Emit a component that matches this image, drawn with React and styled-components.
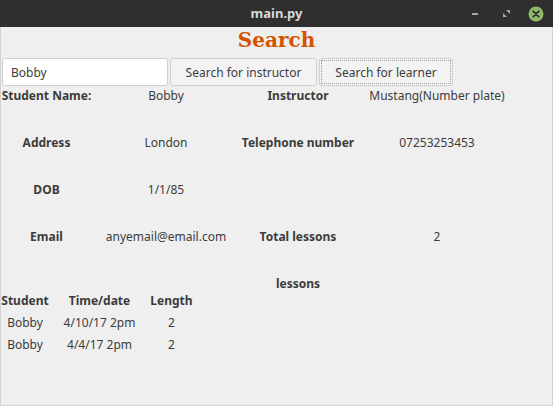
import React from "react";
import styled, { createGlobalStyle } from "styled-components";

const GlobalStyle = createGlobalStyle`
  html, body { margin: 0; padding: 0; background: #efefef; }
  body { font-family: "Noto Sans", "Open Sans", sans-serif; }
  * { box-sizing: border-box; }
`;

const Window = styled.div`
  width: 553px;
  height: 406px;
  display: flex;
  flex-direction: column;
  overflow: hidden;
`;

const TitleBar = styled.div`
  height: 27px;
  flex: none;
  background: #2f2f2f;
  display: grid;
  grid-template-columns: 1fr auto 1fr;
  align-items: center;
`;

const WindowTitle = styled.div`
  grid-column: 2;
  color: #d9d9d9;
  font-weight: 700;
  font-size: 13px;
  line-height: 27px;
`;

const Controls = styled.div`
  grid-column: 3;
  justify-self: end;
  display: flex;
  align-items: center;
  padding-right: 4px;
`;

const ControlSlot = styled.div`
  width: ${(p) => p.$w}px;
  height: 27px;
  display: flex;
  align-items: center;
  justify-content: center;
`;

const Body = styled.div`
  flex: 1;
  background: #efefef;
  border: 1px solid #d3d3d3;
  border-top: none;
  display: flex;
  flex-direction: column;
  color: #3c3c3c;
  font-size: 12px;
`;

const Heading = styled.h1`
  margin: 0;
  height: 31px;
  text-align: center;
  font-family: "DejaVu Serif", "Liberation Serif", serif;
  font-weight: 700;
  font-size: 20px;
  line-height: 26px;
  color: #d35400;
`;

const SearchRow = styled.div`
  display: flex;
  gap: 2px;
  height: 28px;
  padding-left: 1px;
`;

const Entry = styled.input`
  width: 166px;
  height: 28px;
  border: 1px solid #cfcfcf;
  border-radius: 3px;
  background: #ffffff;
  padding: 0 0 0 8px;
  font-family: inherit;
  font-size: 12px;
  color: #3c3c3c;
  outline: none;
`;

const Button = styled.button`
  width: ${(p) => p.$w}px;
  height: 28px;
  border: 1px solid #d0d0d0;
  border-radius: 3px;
  background: #f3f3f3;
  font-family: inherit;
  font-size: 12px;
  color: #3c3c3c;
  padding: 0;
  outline: ${(p) => (p.$focused ? "1px dotted #9a9a9a" : "none")};
  outline-offset: -3px;
`;

const DetailsGrid = styled.div`
  margin-top: 1px;
  display: grid;
  grid-template-columns: 91px 148px 116px 162px;
  grid-auto-rows: 17px;
  row-gap: 30px;
  line-height: 17px;
`;

const Cell = styled.div`
  text-align: center;
  white-space: nowrap;
  font-weight: ${(p) => (p.$bold ? 700 : 400)};
  grid-column: ${(p) => p.$col || "auto"};
`;

const LessonsTable = styled.div`
  display: grid;
  grid-template-columns: 48px 101px 43px;
  grid-auto-rows: 17px;
  row-gap: 5px;
  line-height: 17px;
`;

const MinimizeIcon = () => (
  <svg width="8" height="4" viewBox="0 0 8 4">
    <rect x="1" y="1" width="6" height="2" fill="#a8a8a8" />
  </svg>
);

const MaximizeIcon = () => (
  <svg width="9" height="9" viewBox="0 0 9 9">
    <path d="M1 8 L1 4 L5 8 Z" fill="#a8a8a8" />
    <path d="M8 1 L8 5 L4 1 Z" fill="#a8a8a8" />
  </svg>
);

const CloseIcon = () => (
  <svg width="16" height="16" viewBox="0 0 16 16">
    <circle cx="8" cy="8" r="7.5" fill="#8fba6a" />
    <path d="M5.3 5.3 L10.7 10.7 M10.7 5.3 L5.3 10.7" stroke="#2d2d2d" strokeWidth="1.8" strokeLinecap="round" />
  </svg>
);

const details = [
  [
    { t: "Student Name:", b: true },
    { t: "Bobby" },
    { t: "Instructor", b: true },
    { t: "Mustang(Number plate)" },
  ],
  [
    { t: "Address", b: true },
    { t: "London" },
    { t: "Telephone number", b: true },
    { t: "07253253453" },
  ],
  [{ t: "DOB", b: true }, { t: "1/1/85" }, { t: "" }, { t: "" }],
  [
    { t: "Email", b: true },
    { t: "anyemail@email.com" },
    { t: "Total lessons", b: true },
    { t: "2" },
  ],
];

const lessons = [
  ["Bobby", "4/10/17 2pm", "2"],
  ["Bobby", "4/4/17 2pm", "2"],
];

export default function App() {
  return (
    <>
      <GlobalStyle />
      <Window>
        <TitleBar>
          <WindowTitle>main.py</WindowTitle>
          <Controls>
            <ControlSlot $w={31}>
              <MinimizeIcon />
            </ControlSlot>
            <ControlSlot $w={33}>
              <MaximizeIcon />
            </ControlSlot>
            <ControlSlot $w={26}>
              <CloseIcon />
            </ControlSlot>
          </Controls>
        </TitleBar>
        <Body>
          <Heading>Search</Heading>
          <SearchRow>
            <Entry defaultValue="Bobby" />
            <Button $w={147}>Search for instructor</Button>
            <Button $w={134} $focused>
              Search for learner
            </Button>
          </SearchRow>
          <DetailsGrid>
            {details.flat().map((c, i) => (
              <Cell key={i} $bold={c.b}>
                {c.t}
              </Cell>
            ))}
            <Cell $bold $col={3}>
              lessons
            </Cell>
          </DetailsGrid>
          <LessonsTable>
            <Cell $bold>Student</Cell>
            <Cell $bold>Time/date</Cell>
            <Cell $bold>Length</Cell>
            {lessons.flat().map((v, i) => (
              <Cell key={i}>{v}</Cell>
            ))}
          </LessonsTable>
        </Body>
      </Window>
    </>
  );
}
